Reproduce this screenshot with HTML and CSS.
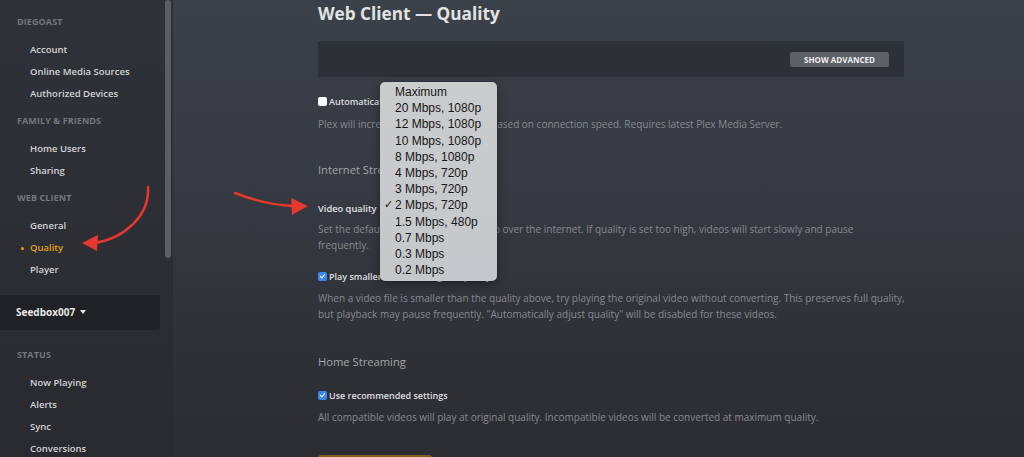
FILE: index.html
```html
<!DOCTYPE html>
<html lang="en">
<head>
<meta charset="utf-8">
<title>Web Client — Quality</title>
<link rel="stylesheet" href="styles.css">
</head>
<body>
<div class="app">
  <aside class="sidebar">
    <div class="nav-header">Diegoast</div>
    <a class="nav-item">Account</a>
    <a class="nav-item">Online Media Sources</a>
    <a class="nav-item">Authorized Devices</a>
    <div class="nav-header">Family &amp; Friends</div>
    <a class="nav-item">Home Users</a>
    <a class="nav-item">Sharing</a>
    <div class="nav-header">Web Client</div>
    <a class="nav-item">General</a>
    <a class="nav-item active">Quality</a>
    <a class="nav-item">Player</a>
    <div class="server-box">Seedbox007 <span class="caret"></span></div>
    <div class="nav-header">Status</div>
    <a class="nav-item">Now Playing</a>
    <a class="nav-item">Alerts</a>
    <a class="nav-item">Sync</a>
    <a class="nav-item">Conversions</a>
    <div class="scrollbar"></div>
  </aside>
  <main class="main">
    <div class="content">
      <h1 class="title">Web Client — Quality</h1>
      <div class="toolbar">
        <button class="btn-advanced">Show Advanced</button>
      </div>

      <label class="check-row first"><span class="checkbox"></span>Automatically adjust quality</label>
      <p class="desc">Plex will increase or decrease quality based on connection speed. Requires latest Plex Media Server.</p>

      <h2 class="section">Internet Streaming</h2>
      <div class="field-row"><span class="field-label">Video quality</span></div>
      <p class="desc">Set the default quality for playing video over the internet. If quality is set too high, videos will start slowly and pause frequently.</p>

      <label class="check-row"><span class="checkbox checked"></span>Play smaller videos at original quality</label>
      <p class="desc wide">When a video file is smaller than the quality above, try playing the original video without converting. This preserves full quality, but playback may pause frequently. "Automatically adjust quality" will be disabled for these videos.</p>

      <h2 class="section home">Home Streaming</h2>
      <label class="check-row"><span class="checkbox checked"></span>Use recommended settings</label>
      <p class="desc wide">All compatible videos will play at original quality. Incompatible videos will be converted at maximum quality.</p>

      <button class="btn-save" aria-label="Save Changes"></button>

      <ul class="dropdown">
        <li>Maximum</li>
        <li>20 Mbps, 1080p</li>
        <li>12 Mbps, 1080p</li>
        <li>10 Mbps, 1080p</li>
        <li>8 Mbps, 1080p</li>
        <li>4 Mbps, 720p</li>
        <li>3 Mbps, 720p</li>
        <li class="selected">2 Mbps, 720p</li>
        <li>1.5 Mbps, 480p</li>
        <li>0.7 Mbps</li>
        <li>0.3 Mbps</li>
        <li>0.2 Mbps</li>
      </ul>
    </div>
  </main>
  <svg class="annotations" width="1024" height="457" viewBox="0 0 1024 457">
    <path d="M148 187 C 150 215, 125 238, 95 243" fill="none" stroke="#e8372c" stroke-width="2.5" stroke-linecap="round"/>
    <polygon points="82,243 98,235 97,251" fill="#e8372c"/>
    <path d="M235 193 C 255 201, 275 205, 294 206" fill="none" stroke="#e8372c" stroke-width="2.5" stroke-linecap="round"/>
    <polygon points="308,206 291,198 292,215" fill="#e8372c"/>
  </svg>
</div>
</body>
</html>
```

FILE: styles.css
```css
* { box-sizing: border-box; }
html, body { margin: 0; padding: 0; }
body {
  width: 1024px;
  height: 457px;
  overflow: hidden;
  font-family: "Open Sans", "Noto Sans", sans-serif;
  background: #33373e;
}
.app {
  position: relative;
  display: flex;
  width: 1024px;
  height: 457px;
}
.sidebar {
  position: relative;
  flex: 0 0 173px;
  height: 457px;
  padding-top: 11px;
  display: flex;
  flex-direction: column;
  background: linear-gradient(180deg, #2e3239 0%, #2c2e34 55%, #292a2f 100%);
}
.nav-header {
  height: 22px;
  line-height: 22px;
  padding-left: 17px;
  margin-bottom: 6px;
  font-size: 9px;
  font-weight: 700;
  text-transform: uppercase;
  color: #74777c;
  letter-spacing: 0.1px;
}
.nav-item + .nav-header { margin-top: 5px; }
.nav-item {
  position: relative;
  height: 22px;
  line-height: 22px;
  padding-left: 30px;
  font-size: 9.5px;
  font-weight: 600;
  color: #d2d3d5;
}
.nav-item.active { color: #e5a00d; }
.nav-item.active::before {
  content: "";
  position: absolute;
  left: 21px;
  top: 10px;
  width: 3px;
  height: 3px;
  border-radius: 50%;
  background: #e5a00d;
}
.server-box {
  margin: 14px 0 14px 0;
  width: 160px;
  height: 36px;
  line-height: 35px;
  padding-left: 16px;
  background: #202125;
  border-radius: 0 3px 3px 0;
  color: #e6e6e6;
  font-size: 10px;
  font-weight: 700;
}
.server-box + .nav-header { margin-top: 0; }
.caret {
  display: inline-block;
  width: 0;
  height: 0;
  margin-left: 2px;
  vertical-align: 2px;
  border-left: 3px solid transparent;
  border-right: 3px solid transparent;
  border-top: 4px solid #e6e6e6;
}
.scrollbar {
  position: absolute;
  right: 2px;
  top: 0;
  width: 6px;
  height: 258px;
  border-radius: 3px;
  background: #5b5f65;
}
.main {
  flex: 1;
  height: 457px;
  padding-left: 145px;
  background: linear-gradient(180deg, #3b4149 0%, #363a42 40%, #2f3137 75%, #2c2d32 100%);
}
.content {
  position: relative;
  width: 586px;
}
.title {
  margin: 0;
  height: 28px;
  line-height: 28px;
  font-size: 17.2px;
  font-weight: 700;
  color: #e2e3e4;
}
.toolbar {
  margin-top: 13px;
  height: 36px;
  display: flex;
  align-items: center;
  justify-content: flex-end;
  padding-right: 15px;
  background: #2c3037;
}
.btn-advanced {
  height: 15px;
  width: 99px;
  padding: 0;
  border: 0;
  border-radius: 2px;
  background: #5c6067;
  color: #eeeeee;
  font-family: "Open Sans", sans-serif;
  font-size: 8px;
  font-weight: 700;
  text-transform: uppercase;
  line-height: 15px;
}
.check-row {
  display: flex;
  align-items: center;
  height: 16px;
  margin-top: 15px;
  font-size: 9px;
  font-weight: 600;
  color: #dedfe0;
  white-space: nowrap;
}
.check-row.first { margin-top: 16px; }
.checkbox {
  position: relative;
  flex: 0 0 9px;
  width: 9px;
  height: 9px;
  margin-right: 2px;
  border-radius: 2px;
  background: #ffffff;
}
.checkbox.checked { background: #3b87f0; }
.checkbox.checked::after {
  content: "";
  position: absolute;
  left: 3px;
  top: 1px;
  width: 2px;
  height: 4px;
  border: solid #ffffff;
  border-width: 0 1.2px 1.2px 0;
  transform: rotate(40deg);
}
.desc {
  width: 586px;
  margin: 7px 0 0 0;
  font-size: 10px;
  line-height: 16px;
  color: #868a8f;
}
.desc.wide { width: 598px; }
.section {
  margin: 28px 0 0 0;
  height: 20px;
  line-height: 20px;
  font-size: 11.2px;
  font-weight: 400;
  color: #a2a5a9;
}
.section.home { margin-top: 30px; }
.field-row {
  height: 20px;
  line-height: 20px;
  margin-top: 16px;
}
.field-row + .desc { margin-top: 5px; }
.field-label {
  font-size: 9.3px;
  font-weight: 600;
  color: #e2e3e4;
}
.check-row + .desc { margin-top: 6px; }
.check-row.first + .desc { margin-top: 7px; }
.btn-save {
  display: block;
  margin-top: 30px;
  width: 114px;
  height: 24px;
  border: 0;
  border-radius: 3px;
  background: #7f5e1e;
}
.dropdown {
  position: absolute;
  left: 62px;
  top: 82px;
  width: 117px;
  margin: 0;
  padding: 2px 0 3px 0;
  list-style: none;
  border-radius: 5px;
  background: linear-gradient(180deg, #cbccce 0%, #c6c7ca 100%);
  box-shadow: 0 3px 10px rgba(0,0,0,0.35), 0 0 0 0.5px rgba(0,0,0,0.2);
}
.dropdown li {
  position: relative;
  height: 16.2px;
  line-height: 16.2px;
  padding-left: 15px;
  font-family: "Liberation Sans", Arial, sans-serif;
  font-size: 12px;
  color: #161616;
  white-space: nowrap;
}
.dropdown li.selected::before {
  content: "✓";
  position: absolute;
  left: 4px;
  top: 0;
  font-family: "DejaVu Sans", sans-serif;
  font-size: 11px;
}
.annotations {
  position: absolute;
  left: 0;
  top: 0;
  pointer-events: none;
}
```
